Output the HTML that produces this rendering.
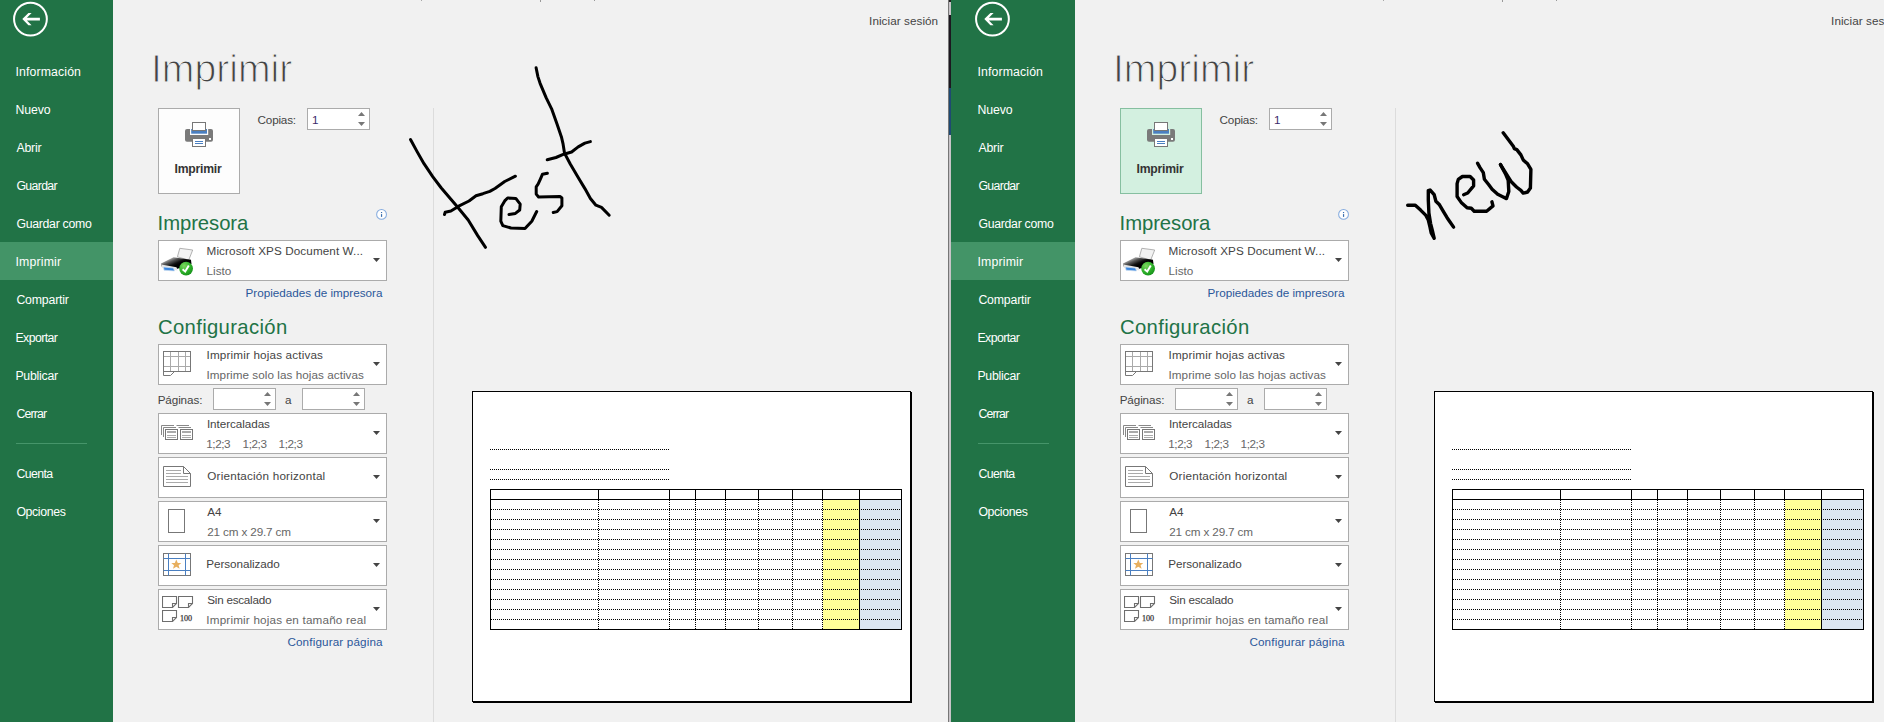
<!DOCTYPE html>
<html><head><meta charset="utf-8"><style>
html,body{margin:0;padding:0}
body{width:1884px;height:722px;overflow:hidden;position:relative;background:#f1f1f1;font-family:"Liberation Sans", sans-serif}
.win{position:absolute;top:0;width:1000px;height:722px}
.t{position:absolute;white-space:nowrap;line-height:1}
.b{position:absolute;display:block}
</style></head><body>
<div class="win" style="left:0px">
<div class="b" style="left:0px;top:0px;width:1000px;height:722px;background:#f1f1f1"></div>
<div class="b" style="left:-11px;top:0px;width:124px;height:722px;background:#217346"></div>
<div class="b" style="left:-11px;top:242px;width:124px;height:38px;background:#439467"></div>
<svg class="b" style="left:12px;top:1px;" width="37" height="37" viewBox="0 0 37 37"><circle cx="18.45" cy="18.1" r="16.4" fill="none" stroke="#fff" stroke-width="2"/><path d="M10.3 18.1 L16.4 12 L19.6 12 L14.9 16.7 L27.9 16.7 L27.9 19.5 L14.9 19.5 L19.6 24.3 L16.4 24.3 Z" fill="#fff"/></svg>
<div class="t" style="left:15.40px;top:66.00px;font-size:12.3px;color:#fff;font-weight:normal;;letter-spacing:0.13px">Información</div>
<div class="t" style="left:15.40px;top:104.00px;font-size:12.3px;color:#fff;font-weight:normal;;letter-spacing:-0.1px">Nuevo</div>
<div class="t" style="left:16.40px;top:142.00px;font-size:12.3px;color:#fff;font-weight:normal;;letter-spacing:-0.2px">Abrir</div>
<div class="t" style="left:16.40px;top:180.00px;font-size:12.3px;color:#fff;font-weight:normal;;letter-spacing:-0.65px">Guardar</div>
<div class="t" style="left:16.40px;top:218.00px;font-size:12.3px;color:#fff;font-weight:normal;;letter-spacing:-0.291px">Guardar como</div>
<div class="t" style="left:15.40px;top:256.00px;font-size:12.3px;color:#fff;font-weight:normal;;letter-spacing:0.186px">Imprimir</div>
<div class="t" style="left:16.40px;top:294.00px;font-size:12.3px;color:#fff;font-weight:normal;;letter-spacing:-0.176px">Compartir</div>
<div class="t" style="left:15.40px;top:332.00px;font-size:12.3px;color:#fff;font-weight:normal;;letter-spacing:-0.557px">Exportar</div>
<div class="t" style="left:15.40px;top:370.00px;font-size:12.3px;color:#fff;font-weight:normal;;letter-spacing:-0.229px">Publicar</div>
<div class="t" style="left:16.40px;top:408.00px;font-size:12.3px;color:#fff;font-weight:normal;;letter-spacing:-0.84px">Cerrar</div>
<div class="t" style="left:16.40px;top:468.00px;font-size:12.3px;color:#fff;font-weight:normal;;letter-spacing:-0.6px">Cuenta</div>
<div class="t" style="left:16.40px;top:506.00px;font-size:12.3px;color:#fff;font-weight:normal;;letter-spacing:-0.357px">Opciones</div>
<div class="b" style="left:16px;top:443px;width:71px;height:1px;background:#46956a"></div>
<div class="b" style="left:421px;top:0px;width:1px;height:1px;background:#a8a8a8"></div>
<div class="b" style="left:540px;top:0px;width:1px;height:2px;background:#999"></div>
<div class="b" style="left:594px;top:0px;width:1px;height:1px;background:#999"></div>
<div class="t" style="left:869.10px;top:15.00px;font-size:11.7px;color:#444;font-weight:normal;;letter-spacing:0.062px">Iniciar sesión</div>
<div class="t" style="left:151.00px;top:49.00px;font-size:39.14px;color:#444;font-weight:normal;-webkit-text-stroke:1.1px #f1f1f1">Imprimir</div>
<div class="b" style="left:433px;top:108px;width:1px;height:614px;background:#dcdcdc"></div>
<div class="b" style="left:158px;top:108px;width:82px;height:86px;background:#fdfdfd;border:1px solid #ababab;box-sizing:border-box"></div>
<svg class="b" style="left:184px;top:121px;" width="30" height="27" viewBox="0 0 30 27"><rect x="1" y="8" width="28" height="12.7" rx="2" fill="#7a7a7a"/><rect x="6" y="8" width="18.2" height="6" fill="#fdfdfd"/><rect x="7.2" y="8" width="15.8" height="4.7" fill="#4a7fc1"/><rect x="8.5" y="1.5" width="13" height="8" fill="#fff" stroke="#777" stroke-width="1"/><rect x="25" y="17" width="2" height="2" fill="#fff"/><rect x="8.5" y="17.5" width="13" height="8" fill="#fff" stroke="#777" stroke-width="1"/><path d="M11 20.5 H19 M11 22.5 H19" stroke="#4a7fc1" stroke-width="1"/></svg>
<div class="t" style="left:174.60px;top:163.00px;font-size:12.2px;color:#333;font-weight:bold;;letter-spacing:-0.229px">Imprimir</div>
<div class="t" style="left:257.60px;top:114.00px;font-size:11.7px;color:#444;font-weight:normal;;letter-spacing:-0.2px">Copias:</div>
<div class="b" style="left:307px;top:108px;width:63px;height:22px;background:#fff;border:1px solid #ababab;box-sizing:border-box"></div><svg class="b" style="left:358px;top:108px;" width="7" height="22" viewBox="0 0 7 22"><path d="M0 8 L3.5 4 L7 8 Z" fill="#777"/><path d="M0 14 L3.5 18 L7 14 Z" fill="#777"/></svg>
<div class="t" style="left:312.00px;top:114.00px;font-size:11.7px;color:#3b2a6b;font-weight:normal;;letter-spacing:0.0px">1</div>
<div class="t" style="left:157.60px;top:213.00px;font-size:20.3px;color:#217346;font-weight:normal;;letter-spacing:-0.075px">Impresora</div>
<svg class="b" style="left:375px;top:208px;" width="13" height="13" viewBox="0 0 13 13"><circle cx="6.55" cy="6.4" r="4.9" fill="#fff" stroke="#86acdf" stroke-width="1.05"/><rect x="5.95" y="4" width="1.2" height="1.1" fill="#3b6fb0"/><rect x="5.95" y="6.1" width="1.2" height="2.8" fill="#3b6fb0"/></svg>
<div class="b" style="left:158px;top:240px;width:229px;height:41px;background:#fff;border:1px solid #ababab;box-sizing:border-box"></div>
<svg class="b" style="left:160px;top:247px;" width="36" height="30" viewBox="0 0 36 30"><defs><linearGradient id="pg0" gradientUnits="userSpaceOnUse" x1="8" y1="11" x2="12" y2="20"><stop offset="0" stop-color="#d0d0d0"/><stop offset="0.45" stop-color="#555"/><stop offset="0.8" stop-color="#111"/><stop offset="1" stop-color="#000"/></linearGradient><radialGradient id="gc0" cx="0.35" cy="0.3" r="0.75"><stop offset="0" stop-color="#7ed860"/><stop offset="0.6" stop-color="#2fb12a"/><stop offset="1" stop-color="#15901a"/></radialGradient></defs><path d="M19.8 1.3 L32.7 3 L28.7 13.1 L17.4 9.8 Z" fill="#f2f2f2" stroke="#a0a0a0" stroke-width="0.8"/><path d="M1 16.5 L13.5 10.2 L31 12.8 L31.5 17 L17.5 21.8 L1.2 19.2 Z" fill="url(#pg0)"/><path d="M1.2 17.5 L16.5 20.2 L17.5 23.5 L2 21 Z" fill="#e6e6e6"/><path d="M3.5 20 L13.5 21 L14.5 24 L4 23.2 Z" fill="#3a86e0" stroke="#cfe0f0" stroke-width="0.7"/><circle cx="26.1" cy="21.6" r="6.9" fill="url(#gc0)"/><path d="M22.6 22.2 L25.2 24.6 L28.8 18.6" fill="none" stroke="#fff" stroke-width="1.9"/></svg>
<div class="t" style="left:206.60px;top:245.00px;font-size:11.7px;color:#444;font-weight:normal;;letter-spacing:0.096px">Microsoft XPS Document W...</div>
<div class="t" style="left:206.60px;top:265.00px;font-size:11.7px;color:#666;font-weight:normal;;letter-spacing:0.0px">Listo</div>
<svg class="b" style="left:373px;top:258px;" width="7" height="4" viewBox="0 0 7 4"><path d="M0 0 H7 L3.5 4 Z" fill="#444"/></svg>
<div class="t" style="left:245.50px;top:287.00px;font-size:11.7px;color:#2b579a;font-weight:normal;;letter-spacing:-0.009px">Propiedades de impresora</div>
<div class="t" style="left:157.90px;top:317.00px;font-size:20.3px;color:#217346;font-weight:normal;;letter-spacing:0.35px">Configuración</div>
<div class="b" style="left:158px;top:344px;width:229px;height:41px;background:#fff;border:1px solid #ababab;box-sizing:border-box"></div>
<svg class="b" style="left:162px;top:350px;" width="30" height="27" viewBox="0 0 30 27"><path d="M8.5 1.5 V21.5 M16.5 1.5 V21.5 M23.5 1.5 V21.5 M1.5 6.5 H28.5 M1.5 16.5 H28.5" stroke="#aaa" stroke-width="1"/><rect x="1.5" y="1.5" width="27" height="20" fill="none" stroke="#777" stroke-width="1"/><path d="M1.5 21.5 V25.5 H8.5 L12.5 21.5" fill="none" stroke="#777" stroke-width="1"/></svg>
<div class="t" style="left:206.50px;top:349.00px;font-size:11.7px;color:#444;font-weight:normal;;letter-spacing:0.162px">Imprimir hojas activas</div>
<div class="t" style="left:206.50px;top:369.00px;font-size:11.7px;color:#666;font-weight:normal;;letter-spacing:0.052px">Imprime solo las hojas activas</div>
<svg class="b" style="left:373px;top:362px;" width="7" height="4" viewBox="0 0 7 4"><path d="M0 0 H7 L3.5 4 Z" fill="#444"/></svg>
<div class="t" style="left:157.70px;top:394.00px;font-size:11.7px;color:#444;font-weight:normal;;letter-spacing:-0.114px">Páginas:</div>
<div class="b" style="left:213px;top:388px;width:63px;height:22px;background:#fff;border:1px solid #ababab;box-sizing:border-box"></div><svg class="b" style="left:264px;top:388px;" width="7" height="22" viewBox="0 0 7 22"><path d="M0 8 L3.5 4 L7 8 Z" fill="#777"/><path d="M0 14 L3.5 18 L7 14 Z" fill="#777"/></svg>
<div class="t" style="left:285.00px;top:394.00px;font-size:11.7px;color:#444;font-weight:normal;;letter-spacing:0.0px">a</div>
<div class="b" style="left:302px;top:388px;width:63px;height:22px;background:#fff;border:1px solid #ababab;box-sizing:border-box"></div><svg class="b" style="left:353px;top:388px;" width="7" height="22" viewBox="0 0 7 22"><path d="M0 8 L3.5 4 L7 8 Z" fill="#777"/><path d="M0 14 L3.5 18 L7 14 Z" fill="#777"/></svg>
<div class="b" style="left:158px;top:413px;width:229px;height:41px;background:#fff;border:1px solid #ababab;box-sizing:border-box"></div>
<svg class="b" style="left:160px;top:424px;" width="34" height="17" viewBox="0 0 34 17"><path d="M1.5 11 V1.5 H14" fill="none" stroke="#888" stroke-width="1"/><path d="M3.5 13 V3.5 H16" fill="none" stroke="#888" stroke-width="1"/><path d="M16.5 1.5 H29 M18.5 3.5 H31" fill="none" stroke="#888" stroke-width="1"/><rect x="5.5" y="5.5" width="12" height="10" fill="#fff" stroke="#777" stroke-width="1"/><rect x="20.5" y="5.5" width="12" height="10" fill="#fff" stroke="#777" stroke-width="1"/><path d="M7 8 H16 M22 8 H31" stroke="#aaa" stroke-width="2"/><path d="M7 11.5 H16 M7 13.5 H16 M22 11.5 H31 M22 13.5 H31" stroke="#aaa" stroke-width="1"/></svg>
<div class="t" style="left:206.90px;top:418.00px;font-size:11.7px;color:#444;font-weight:normal;;letter-spacing:-0.055px">Intercaladas</div>
<div class="t" style="left:206.30px;top:438.00px;font-size:11.7px;color:#666;font-weight:normal;;letter-spacing:-0.425px">1;2;3</div>
<div class="t" style="left:242.60px;top:438.00px;font-size:11.7px;color:#666;font-weight:normal;;letter-spacing:-0.425px">1;2;3</div>
<div class="t" style="left:278.60px;top:438.00px;font-size:11.7px;color:#666;font-weight:normal;;letter-spacing:-0.425px">1;2;3</div>
<svg class="b" style="left:373px;top:431px;" width="7" height="4" viewBox="0 0 7 4"><path d="M0 0 H7 L3.5 4 Z" fill="#444"/></svg>
<div class="b" style="left:158px;top:457px;width:229px;height:41px;background:#fff;border:1px solid #ababab;box-sizing:border-box"></div>
<svg class="b" style="left:162px;top:465px;" width="30" height="23" viewBox="0 0 30 23"><path d="M1.5 1.5 H21.5 L28.5 8.5 V21.5 H1.5 Z" fill="#fff" stroke="#777" stroke-width="1"/><path d="M21.5 1.5 V8.5 H28.5" fill="none" stroke="#777" stroke-width="1"/><path d="M4 5.5 H19 M4 8.5 H19 M4 11.5 H26 M4 14.5 H26 M4 17.5 H26" stroke="#aaa" stroke-width="1"/></svg>
<div class="t" style="left:207.30px;top:470.00px;font-size:11.7px;color:#444;font-weight:normal;;letter-spacing:0.2px">Orientación horizontal</div>
<svg class="b" style="left:373px;top:475px;" width="7" height="4" viewBox="0 0 7 4"><path d="M0 0 H7 L3.5 4 Z" fill="#444"/></svg>
<div class="b" style="left:158px;top:501px;width:229px;height:41px;background:#fff;border:1px solid #ababab;box-sizing:border-box"></div>
<div class="b" style="left:168px;top:509px;width:17px;height:24px;border:1px solid #777;box-sizing:border-box;background:#fff"></div>
<div class="t" style="left:207.20px;top:506.00px;font-size:11.7px;color:#444;font-weight:normal;;letter-spacing:0.0px">A4</div>
<div class="t" style="left:207.20px;top:526.00px;font-size:11.7px;color:#666;font-weight:normal;;letter-spacing:-0.136px">21 cm x 29.7 cm</div>
<svg class="b" style="left:373px;top:519px;" width="7" height="4" viewBox="0 0 7 4"><path d="M0 0 H7 L3.5 4 Z" fill="#444"/></svg>
<div class="b" style="left:158px;top:545px;width:229px;height:41px;background:#fff;border:1px solid #ababab;box-sizing:border-box"></div>
<svg class="b" style="left:162px;top:552px;" width="30" height="25" viewBox="0 0 30 25"><rect x="1.5" y="1.5" width="27" height="22" fill="#fff" stroke="#777" stroke-width="1"/><path d="M6.5 1.5 V23.5 M23.5 1.5 V23.5 M1.5 6.5 H28.5 M1.5 18.5 H28.5" stroke="#4a7fc1" stroke-width="1"/><path d="M14.3 7.5 L15.8 10.9 L19.3 11.1 L16.6 13.3 L17.6 16.8 L14.3 14.8 L11 16.8 L12 13.3 L9.3 11.1 L12.8 10.9 Z" fill="#e8b060"/></svg>
<div class="t" style="left:206.30px;top:558.00px;font-size:11.7px;color:#444;font-weight:normal;;letter-spacing:-0.058px">Personalizado</div>
<svg class="b" style="left:373px;top:563px;" width="7" height="4" viewBox="0 0 7 4"><path d="M0 0 H7 L3.5 4 Z" fill="#444"/></svg>
<div class="b" style="left:158px;top:589px;width:229px;height:41px;background:#fff;border:1px solid #ababab;box-sizing:border-box"></div>
<svg class="b" style="left:162px;top:596px;" width="32" height="27" viewBox="0 0 32 27"><path d="M0.5 0.5 H14.5 V7.5 L10.5 11.5 H0.5 Z" fill="#fff" stroke="#6e6e6e" stroke-width="1.1" stroke-linejoin="miter"/><path d="M14.5 7.5 H10.5 V11.5" fill="none" stroke="#6e6e6e" stroke-width="1.1"/><path d="M16.5 0.5 H30.5 V7.5 L26.5 11.5 H16.5 Z" fill="#fff" stroke="#6e6e6e" stroke-width="1.1" stroke-linejoin="miter"/><path d="M30.5 7.5 H26.5 V11.5" fill="none" stroke="#6e6e6e" stroke-width="1.1"/><path d="M0.5 14.5 H14.5 V21.5 L10.5 25.5 H0.5 Z" fill="#fff" stroke="#6e6e6e" stroke-width="1.1" stroke-linejoin="miter"/><path d="M14.5 21.5 H10.5 V25.5" fill="none" stroke="#6e6e6e" stroke-width="1.1"/><text x="17.9" y="24.9" font-family="Liberation Serif" font-size="8.6" textLength="12.2" lengthAdjust="spacingAndGlyphs" fill="#333" stroke="#333" stroke-width="0.25">100</text></svg>
<div class="t" style="left:207.30px;top:594.00px;font-size:11.7px;color:#444;font-weight:normal;;letter-spacing:-0.255px">Sin escalado</div>
<div class="t" style="left:206.30px;top:614.00px;font-size:11.7px;color:#666;font-weight:normal;;letter-spacing:0.182px">Imprimir hojas en tamaño real</div>
<svg class="b" style="left:373px;top:607px;" width="7" height="4" viewBox="0 0 7 4"><path d="M0 0 H7 L3.5 4 Z" fill="#444"/></svg>
<div class="t" style="left:287.40px;top:636.00px;font-size:11.7px;color:#2b579a;font-weight:normal;;letter-spacing:0.144px">Configurar página</div>
<div class="b" style="left:472px;top:391px;width:439px;height:311px;background:#fff;border:1px solid #000;box-sizing:border-box;box-shadow:1px 1px 0 #000"></div>
<div class="b" style="left:490px;top:449px;width:179px;height:1px;background-image:linear-gradient(90deg,#000 50%,transparent 50%);background-size:2px 1px"></div>
<div class="b" style="left:490px;top:469px;width:179px;height:1px;background-image:linear-gradient(90deg,#000 50%,transparent 50%);background-size:2px 1px"></div>
<div class="b" style="left:490px;top:479px;width:179px;height:1px;background-image:linear-gradient(90deg,#000 50%,transparent 50%);background-size:2px 1px"></div>
<div class="b" style="left:823px;top:500px;width:36px;height:129px;background:#ffff99"></div>
<div class="b" style="left:860px;top:500px;width:41px;height:129px;background:#dce6f1"></div>
<div class="b" style="left:491px;top:509px;width:410px;height:1px;background-image:linear-gradient(90deg,#000 50%,transparent 50%);background-size:2px 1px"></div>
<div class="b" style="left:491px;top:519px;width:410px;height:1px;background-image:linear-gradient(90deg,#000 50%,transparent 50%);background-size:2px 1px"></div>
<div class="b" style="left:491px;top:529px;width:410px;height:1px;background-image:linear-gradient(90deg,#000 50%,transparent 50%);background-size:2px 1px"></div>
<div class="b" style="left:491px;top:539px;width:410px;height:1px;background-image:linear-gradient(90deg,#000 50%,transparent 50%);background-size:2px 1px"></div>
<div class="b" style="left:491px;top:549px;width:410px;height:1px;background-image:linear-gradient(90deg,#000 50%,transparent 50%);background-size:2px 1px"></div>
<div class="b" style="left:491px;top:559px;width:410px;height:1px;background-image:linear-gradient(90deg,#000 50%,transparent 50%);background-size:2px 1px"></div>
<div class="b" style="left:491px;top:569px;width:410px;height:1px;background-image:linear-gradient(90deg,#000 50%,transparent 50%);background-size:2px 1px"></div>
<div class="b" style="left:491px;top:579px;width:410px;height:1px;background-image:linear-gradient(90deg,#000 50%,transparent 50%);background-size:2px 1px"></div>
<div class="b" style="left:491px;top:589px;width:410px;height:1px;background-image:linear-gradient(90deg,#000 50%,transparent 50%);background-size:2px 1px"></div>
<div class="b" style="left:491px;top:599px;width:410px;height:1px;background-image:linear-gradient(90deg,#000 50%,transparent 50%);background-size:2px 1px"></div>
<div class="b" style="left:491px;top:609px;width:410px;height:1px;background-image:linear-gradient(90deg,#000 50%,transparent 50%);background-size:2px 1px"></div>
<div class="b" style="left:491px;top:619px;width:410px;height:1px;background-image:linear-gradient(90deg,#000 50%,transparent 50%);background-size:2px 1px"></div>
<div class="b" style="left:598px;top:500px;width:1px;height:129px;background-image:linear-gradient(180deg,#000 50%,transparent 50%);background-size:1px 2px"></div>
<div class="b" style="left:598px;top:489px;width:1px;height:11px;background:#000"></div>
<div class="b" style="left:669px;top:500px;width:1px;height:129px;background-image:linear-gradient(180deg,#000 50%,transparent 50%);background-size:1px 2px"></div>
<div class="b" style="left:669px;top:489px;width:1px;height:11px;background:#000"></div>
<div class="b" style="left:695px;top:500px;width:1px;height:129px;background-image:linear-gradient(180deg,#000 50%,transparent 50%);background-size:1px 2px"></div>
<div class="b" style="left:695px;top:489px;width:1px;height:11px;background:#000"></div>
<div class="b" style="left:725px;top:500px;width:1px;height:129px;background-image:linear-gradient(180deg,#000 50%,transparent 50%);background-size:1px 2px"></div>
<div class="b" style="left:725px;top:489px;width:1px;height:11px;background:#000"></div>
<div class="b" style="left:758px;top:500px;width:1px;height:129px;background-image:linear-gradient(180deg,#000 50%,transparent 50%);background-size:1px 2px"></div>
<div class="b" style="left:758px;top:489px;width:1px;height:11px;background:#000"></div>
<div class="b" style="left:792px;top:500px;width:1px;height:129px;background-image:linear-gradient(180deg,#000 50%,transparent 50%);background-size:1px 2px"></div>
<div class="b" style="left:792px;top:489px;width:1px;height:11px;background:#000"></div>
<div class="b" style="left:822px;top:500px;width:1px;height:129px;background-image:linear-gradient(180deg,#000 50%,transparent 50%);background-size:1px 2px"></div>
<div class="b" style="left:822px;top:489px;width:1px;height:11px;background:#000"></div>
<div class="b" style="left:859px;top:489px;width:1px;height:141px;background:#000"></div>
<div class="b" style="left:490px;top:489px;width:412px;height:141px;border:1px solid #000;box-sizing:border-box"></div>
<div class="b" style="left:490px;top:499px;width:412px;height:1px;background:#000"></div>
<svg class="b" style="left:0;top:0" width="1000" height="722" viewBox="0 0 1000 722"><g fill="none" stroke="#000" stroke-width="3" stroke-linecap="round" stroke-linejoin="round"><path d="M410.5 139.5 L417.1 151.6 L424.0 163.7 L432.7 176.7 L441.3 188.0 L456.9 206.2 L468.2 220.0 L477.7 235.6 L485.5 247.3"/><path d="M444.5 214.5 L445.2 212.2 L450.9 211.0 L458.7 206.2 L469.0 201.0 L476.0 195.8 L482.9 193.7 L489.8 191.4 L495.0 188.5 L504.7 181.5 L515.4 176.2"/><path d="M509.0 214.4 L515.4 213.4 L519.7 210.0 L520.2 204.2 L515.8 198.4 L507.6 198.0 L504.7 200.9 L501.3 206.7 L500.8 221.2 L502.8 225.6 L511.0 228.0 L525.0 228.5 L531.8 221.2 L536.7 211.5"/><path d="M547.4 173.2 L542.5 174.2 L540.6 178.6 L538.2 183.9 L536.2 186.8 L536.2 194.1 L538.6 197.0 L560.0 196.5 L561.9 198.0 L561.9 205.7 L557.1 211.6 L553.2 212.5"/><path d="M536.1 67.8 L537.9 76.6 L540.1 83.3 L546.1 97.7 L551.6 108.8 L557.1 124.3 L561.6 137.6 L563.1 144.2 L564.5 153.1 L570.4 164.2 L578.2 177.5 L584.9 188.6 L590.4 198.5 L595.9 205.2 L601.5 207.4 L609.2 215.2"/><path d="M547.2 159.8 L556.0 157.5 L563.8 154.2 L571.6 152.0 L578.2 146.9 L584.9 143.1 L590.4 141.6"/></g></svg>
</div>
<div class="win" style="left:962px">
<div class="b" style="left:0px;top:0px;width:1000px;height:722px;background:#f1f1f1"></div>
<div class="b" style="left:-11px;top:0px;width:124px;height:722px;background:#217346"></div>
<div class="b" style="left:-11px;top:242px;width:124px;height:38px;background:#439467"></div>
<svg class="b" style="left:12px;top:1px;" width="37" height="37" viewBox="0 0 37 37"><circle cx="18.45" cy="18.1" r="16.4" fill="none" stroke="#fff" stroke-width="2"/><path d="M10.3 18.1 L16.4 12 L19.6 12 L14.9 16.7 L27.9 16.7 L27.9 19.5 L14.9 19.5 L19.6 24.3 L16.4 24.3 Z" fill="#fff"/></svg>
<div class="t" style="left:15.40px;top:66.00px;font-size:12.3px;color:#fff;font-weight:normal;;letter-spacing:0.13px">Información</div>
<div class="t" style="left:15.40px;top:104.00px;font-size:12.3px;color:#fff;font-weight:normal;;letter-spacing:-0.1px">Nuevo</div>
<div class="t" style="left:16.40px;top:142.00px;font-size:12.3px;color:#fff;font-weight:normal;;letter-spacing:-0.2px">Abrir</div>
<div class="t" style="left:16.40px;top:180.00px;font-size:12.3px;color:#fff;font-weight:normal;;letter-spacing:-0.65px">Guardar</div>
<div class="t" style="left:16.40px;top:218.00px;font-size:12.3px;color:#fff;font-weight:normal;;letter-spacing:-0.291px">Guardar como</div>
<div class="t" style="left:15.40px;top:256.00px;font-size:12.3px;color:#fff;font-weight:normal;;letter-spacing:0.186px">Imprimir</div>
<div class="t" style="left:16.40px;top:294.00px;font-size:12.3px;color:#fff;font-weight:normal;;letter-spacing:-0.176px">Compartir</div>
<div class="t" style="left:15.40px;top:332.00px;font-size:12.3px;color:#fff;font-weight:normal;;letter-spacing:-0.557px">Exportar</div>
<div class="t" style="left:15.40px;top:370.00px;font-size:12.3px;color:#fff;font-weight:normal;;letter-spacing:-0.229px">Publicar</div>
<div class="t" style="left:16.40px;top:408.00px;font-size:12.3px;color:#fff;font-weight:normal;;letter-spacing:-0.84px">Cerrar</div>
<div class="t" style="left:16.40px;top:468.00px;font-size:12.3px;color:#fff;font-weight:normal;;letter-spacing:-0.6px">Cuenta</div>
<div class="t" style="left:16.40px;top:506.00px;font-size:12.3px;color:#fff;font-weight:normal;;letter-spacing:-0.357px">Opciones</div>
<div class="b" style="left:16px;top:443px;width:71px;height:1px;background:#46956a"></div>
<div class="b" style="left:421px;top:0px;width:1px;height:1px;background:#a8a8a8"></div>
<div class="b" style="left:540px;top:0px;width:1px;height:2px;background:#999"></div>
<div class="b" style="left:594px;top:0px;width:1px;height:1px;background:#999"></div>
<div class="t" style="left:869.10px;top:15.00px;font-size:11.7px;color:#444;font-weight:normal;;letter-spacing:0.062px">Iniciar sesión</div>
<div class="t" style="left:151.00px;top:49.00px;font-size:39.14px;color:#444;font-weight:normal;-webkit-text-stroke:1.1px #f1f1f1">Imprimir</div>
<div class="b" style="left:433px;top:108px;width:1px;height:614px;background:#dcdcdc"></div>
<div class="b" style="left:158px;top:108px;width:82px;height:86px;background:#d3f0e0;border:1px solid #86bfa0;box-sizing:border-box"></div>
<svg class="b" style="left:184px;top:121px;" width="30" height="27" viewBox="0 0 30 27"><rect x="1" y="8" width="28" height="12.7" rx="2" fill="#7a7a7a"/><rect x="6" y="8" width="18.2" height="6" fill="#d3f0e0"/><rect x="7.2" y="8" width="15.8" height="4.7" fill="#4a7fc1"/><rect x="8.5" y="1.5" width="13" height="8" fill="#fff" stroke="#777" stroke-width="1"/><rect x="25" y="17" width="2" height="2" fill="#fff"/><rect x="8.5" y="17.5" width="13" height="8" fill="#fff" stroke="#777" stroke-width="1"/><path d="M11 20.5 H19 M11 22.5 H19" stroke="#4a7fc1" stroke-width="1"/></svg>
<div class="t" style="left:174.60px;top:163.00px;font-size:12.2px;color:#333;font-weight:bold;;letter-spacing:-0.229px">Imprimir</div>
<div class="t" style="left:257.60px;top:114.00px;font-size:11.7px;color:#444;font-weight:normal;;letter-spacing:-0.2px">Copias:</div>
<div class="b" style="left:307px;top:108px;width:63px;height:22px;background:#fff;border:1px solid #ababab;box-sizing:border-box"></div><svg class="b" style="left:358px;top:108px;" width="7" height="22" viewBox="0 0 7 22"><path d="M0 8 L3.5 4 L7 8 Z" fill="#777"/><path d="M0 14 L3.5 18 L7 14 Z" fill="#777"/></svg>
<div class="t" style="left:312.00px;top:114.00px;font-size:11.7px;color:#3b2a6b;font-weight:normal;;letter-spacing:0.0px">1</div>
<div class="t" style="left:157.60px;top:213.00px;font-size:20.3px;color:#217346;font-weight:normal;;letter-spacing:-0.075px">Impresora</div>
<svg class="b" style="left:375px;top:208px;" width="13" height="13" viewBox="0 0 13 13"><circle cx="6.55" cy="6.4" r="4.9" fill="#fff" stroke="#86acdf" stroke-width="1.05"/><rect x="5.95" y="4" width="1.2" height="1.1" fill="#3b6fb0"/><rect x="5.95" y="6.1" width="1.2" height="2.8" fill="#3b6fb0"/></svg>
<div class="b" style="left:158px;top:240px;width:229px;height:41px;background:#fff;border:1px solid #ababab;box-sizing:border-box"></div>
<svg class="b" style="left:160px;top:247px;" width="36" height="30" viewBox="0 0 36 30"><defs><linearGradient id="pg962" gradientUnits="userSpaceOnUse" x1="8" y1="11" x2="12" y2="20"><stop offset="0" stop-color="#d0d0d0"/><stop offset="0.45" stop-color="#555"/><stop offset="0.8" stop-color="#111"/><stop offset="1" stop-color="#000"/></linearGradient><radialGradient id="gc962" cx="0.35" cy="0.3" r="0.75"><stop offset="0" stop-color="#7ed860"/><stop offset="0.6" stop-color="#2fb12a"/><stop offset="1" stop-color="#15901a"/></radialGradient></defs><path d="M19.8 1.3 L32.7 3 L28.7 13.1 L17.4 9.8 Z" fill="#f2f2f2" stroke="#a0a0a0" stroke-width="0.8"/><path d="M1 16.5 L13.5 10.2 L31 12.8 L31.5 17 L17.5 21.8 L1.2 19.2 Z" fill="url(#pg962)"/><path d="M1.2 17.5 L16.5 20.2 L17.5 23.5 L2 21 Z" fill="#e6e6e6"/><path d="M3.5 20 L13.5 21 L14.5 24 L4 23.2 Z" fill="#3a86e0" stroke="#cfe0f0" stroke-width="0.7"/><circle cx="26.1" cy="21.6" r="6.9" fill="url(#gc962)"/><path d="M22.6 22.2 L25.2 24.6 L28.8 18.6" fill="none" stroke="#fff" stroke-width="1.9"/></svg>
<div class="t" style="left:206.60px;top:245.00px;font-size:11.7px;color:#444;font-weight:normal;;letter-spacing:0.096px">Microsoft XPS Document W...</div>
<div class="t" style="left:206.60px;top:265.00px;font-size:11.7px;color:#666;font-weight:normal;;letter-spacing:0.0px">Listo</div>
<svg class="b" style="left:373px;top:258px;" width="7" height="4" viewBox="0 0 7 4"><path d="M0 0 H7 L3.5 4 Z" fill="#444"/></svg>
<div class="t" style="left:245.50px;top:287.00px;font-size:11.7px;color:#2b579a;font-weight:normal;;letter-spacing:-0.009px">Propiedades de impresora</div>
<div class="t" style="left:157.90px;top:317.00px;font-size:20.3px;color:#217346;font-weight:normal;;letter-spacing:0.35px">Configuración</div>
<div class="b" style="left:158px;top:344px;width:229px;height:41px;background:#fff;border:1px solid #ababab;box-sizing:border-box"></div>
<svg class="b" style="left:162px;top:350px;" width="30" height="27" viewBox="0 0 30 27"><path d="M8.5 1.5 V21.5 M16.5 1.5 V21.5 M23.5 1.5 V21.5 M1.5 6.5 H28.5 M1.5 16.5 H28.5" stroke="#aaa" stroke-width="1"/><rect x="1.5" y="1.5" width="27" height="20" fill="none" stroke="#777" stroke-width="1"/><path d="M1.5 21.5 V25.5 H8.5 L12.5 21.5" fill="none" stroke="#777" stroke-width="1"/></svg>
<div class="t" style="left:206.50px;top:349.00px;font-size:11.7px;color:#444;font-weight:normal;;letter-spacing:0.162px">Imprimir hojas activas</div>
<div class="t" style="left:206.50px;top:369.00px;font-size:11.7px;color:#666;font-weight:normal;;letter-spacing:0.052px">Imprime solo las hojas activas</div>
<svg class="b" style="left:373px;top:362px;" width="7" height="4" viewBox="0 0 7 4"><path d="M0 0 H7 L3.5 4 Z" fill="#444"/></svg>
<div class="t" style="left:157.70px;top:394.00px;font-size:11.7px;color:#444;font-weight:normal;;letter-spacing:-0.114px">Páginas:</div>
<div class="b" style="left:213px;top:388px;width:63px;height:22px;background:#fff;border:1px solid #ababab;box-sizing:border-box"></div><svg class="b" style="left:264px;top:388px;" width="7" height="22" viewBox="0 0 7 22"><path d="M0 8 L3.5 4 L7 8 Z" fill="#777"/><path d="M0 14 L3.5 18 L7 14 Z" fill="#777"/></svg>
<div class="t" style="left:285.00px;top:394.00px;font-size:11.7px;color:#444;font-weight:normal;;letter-spacing:0.0px">a</div>
<div class="b" style="left:302px;top:388px;width:63px;height:22px;background:#fff;border:1px solid #ababab;box-sizing:border-box"></div><svg class="b" style="left:353px;top:388px;" width="7" height="22" viewBox="0 0 7 22"><path d="M0 8 L3.5 4 L7 8 Z" fill="#777"/><path d="M0 14 L3.5 18 L7 14 Z" fill="#777"/></svg>
<div class="b" style="left:158px;top:413px;width:229px;height:41px;background:#fff;border:1px solid #ababab;box-sizing:border-box"></div>
<svg class="b" style="left:160px;top:424px;" width="34" height="17" viewBox="0 0 34 17"><path d="M1.5 11 V1.5 H14" fill="none" stroke="#888" stroke-width="1"/><path d="M3.5 13 V3.5 H16" fill="none" stroke="#888" stroke-width="1"/><path d="M16.5 1.5 H29 M18.5 3.5 H31" fill="none" stroke="#888" stroke-width="1"/><rect x="5.5" y="5.5" width="12" height="10" fill="#fff" stroke="#777" stroke-width="1"/><rect x="20.5" y="5.5" width="12" height="10" fill="#fff" stroke="#777" stroke-width="1"/><path d="M7 8 H16 M22 8 H31" stroke="#aaa" stroke-width="2"/><path d="M7 11.5 H16 M7 13.5 H16 M22 11.5 H31 M22 13.5 H31" stroke="#aaa" stroke-width="1"/></svg>
<div class="t" style="left:206.90px;top:418.00px;font-size:11.7px;color:#444;font-weight:normal;;letter-spacing:-0.055px">Intercaladas</div>
<div class="t" style="left:206.30px;top:438.00px;font-size:11.7px;color:#666;font-weight:normal;;letter-spacing:-0.425px">1;2;3</div>
<div class="t" style="left:242.60px;top:438.00px;font-size:11.7px;color:#666;font-weight:normal;;letter-spacing:-0.425px">1;2;3</div>
<div class="t" style="left:278.60px;top:438.00px;font-size:11.7px;color:#666;font-weight:normal;;letter-spacing:-0.425px">1;2;3</div>
<svg class="b" style="left:373px;top:431px;" width="7" height="4" viewBox="0 0 7 4"><path d="M0 0 H7 L3.5 4 Z" fill="#444"/></svg>
<div class="b" style="left:158px;top:457px;width:229px;height:41px;background:#fff;border:1px solid #ababab;box-sizing:border-box"></div>
<svg class="b" style="left:162px;top:465px;" width="30" height="23" viewBox="0 0 30 23"><path d="M1.5 1.5 H21.5 L28.5 8.5 V21.5 H1.5 Z" fill="#fff" stroke="#777" stroke-width="1"/><path d="M21.5 1.5 V8.5 H28.5" fill="none" stroke="#777" stroke-width="1"/><path d="M4 5.5 H19 M4 8.5 H19 M4 11.5 H26 M4 14.5 H26 M4 17.5 H26" stroke="#aaa" stroke-width="1"/></svg>
<div class="t" style="left:207.30px;top:470.00px;font-size:11.7px;color:#444;font-weight:normal;;letter-spacing:0.2px">Orientación horizontal</div>
<svg class="b" style="left:373px;top:475px;" width="7" height="4" viewBox="0 0 7 4"><path d="M0 0 H7 L3.5 4 Z" fill="#444"/></svg>
<div class="b" style="left:158px;top:501px;width:229px;height:41px;background:#fff;border:1px solid #ababab;box-sizing:border-box"></div>
<div class="b" style="left:168px;top:509px;width:17px;height:24px;border:1px solid #777;box-sizing:border-box;background:#fff"></div>
<div class="t" style="left:207.20px;top:506.00px;font-size:11.7px;color:#444;font-weight:normal;;letter-spacing:0.0px">A4</div>
<div class="t" style="left:207.20px;top:526.00px;font-size:11.7px;color:#666;font-weight:normal;;letter-spacing:-0.136px">21 cm x 29.7 cm</div>
<svg class="b" style="left:373px;top:519px;" width="7" height="4" viewBox="0 0 7 4"><path d="M0 0 H7 L3.5 4 Z" fill="#444"/></svg>
<div class="b" style="left:158px;top:545px;width:229px;height:41px;background:#fff;border:1px solid #ababab;box-sizing:border-box"></div>
<svg class="b" style="left:162px;top:552px;" width="30" height="25" viewBox="0 0 30 25"><rect x="1.5" y="1.5" width="27" height="22" fill="#fff" stroke="#777" stroke-width="1"/><path d="M6.5 1.5 V23.5 M23.5 1.5 V23.5 M1.5 6.5 H28.5 M1.5 18.5 H28.5" stroke="#4a7fc1" stroke-width="1"/><path d="M14.3 7.5 L15.8 10.9 L19.3 11.1 L16.6 13.3 L17.6 16.8 L14.3 14.8 L11 16.8 L12 13.3 L9.3 11.1 L12.8 10.9 Z" fill="#e8b060"/></svg>
<div class="t" style="left:206.30px;top:558.00px;font-size:11.7px;color:#444;font-weight:normal;;letter-spacing:-0.058px">Personalizado</div>
<svg class="b" style="left:373px;top:563px;" width="7" height="4" viewBox="0 0 7 4"><path d="M0 0 H7 L3.5 4 Z" fill="#444"/></svg>
<div class="b" style="left:158px;top:589px;width:229px;height:41px;background:#fff;border:1px solid #ababab;box-sizing:border-box"></div>
<svg class="b" style="left:162px;top:596px;" width="32" height="27" viewBox="0 0 32 27"><path d="M0.5 0.5 H14.5 V7.5 L10.5 11.5 H0.5 Z" fill="#fff" stroke="#6e6e6e" stroke-width="1.1" stroke-linejoin="miter"/><path d="M14.5 7.5 H10.5 V11.5" fill="none" stroke="#6e6e6e" stroke-width="1.1"/><path d="M16.5 0.5 H30.5 V7.5 L26.5 11.5 H16.5 Z" fill="#fff" stroke="#6e6e6e" stroke-width="1.1" stroke-linejoin="miter"/><path d="M30.5 7.5 H26.5 V11.5" fill="none" stroke="#6e6e6e" stroke-width="1.1"/><path d="M0.5 14.5 H14.5 V21.5 L10.5 25.5 H0.5 Z" fill="#fff" stroke="#6e6e6e" stroke-width="1.1" stroke-linejoin="miter"/><path d="M14.5 21.5 H10.5 V25.5" fill="none" stroke="#6e6e6e" stroke-width="1.1"/><text x="17.9" y="24.9" font-family="Liberation Serif" font-size="8.6" textLength="12.2" lengthAdjust="spacingAndGlyphs" fill="#333" stroke="#333" stroke-width="0.25">100</text></svg>
<div class="t" style="left:207.30px;top:594.00px;font-size:11.7px;color:#444;font-weight:normal;;letter-spacing:-0.255px">Sin escalado</div>
<div class="t" style="left:206.30px;top:614.00px;font-size:11.7px;color:#666;font-weight:normal;;letter-spacing:0.182px">Imprimir hojas en tamaño real</div>
<svg class="b" style="left:373px;top:607px;" width="7" height="4" viewBox="0 0 7 4"><path d="M0 0 H7 L3.5 4 Z" fill="#444"/></svg>
<div class="t" style="left:287.40px;top:636.00px;font-size:11.7px;color:#2b579a;font-weight:normal;;letter-spacing:0.144px">Configurar página</div>
<div class="b" style="left:472px;top:391px;width:439px;height:311px;background:#fff;border:1px solid #000;box-sizing:border-box;box-shadow:1px 1px 0 #000"></div>
<div class="b" style="left:490px;top:449px;width:179px;height:1px;background-image:linear-gradient(90deg,#000 50%,transparent 50%);background-size:2px 1px"></div>
<div class="b" style="left:490px;top:469px;width:179px;height:1px;background-image:linear-gradient(90deg,#000 50%,transparent 50%);background-size:2px 1px"></div>
<div class="b" style="left:490px;top:479px;width:179px;height:1px;background-image:linear-gradient(90deg,#000 50%,transparent 50%);background-size:2px 1px"></div>
<div class="b" style="left:823px;top:500px;width:36px;height:129px;background:#ffff99"></div>
<div class="b" style="left:860px;top:500px;width:41px;height:129px;background:#dce6f1"></div>
<div class="b" style="left:491px;top:509px;width:410px;height:1px;background-image:linear-gradient(90deg,#000 50%,transparent 50%);background-size:2px 1px"></div>
<div class="b" style="left:491px;top:519px;width:410px;height:1px;background-image:linear-gradient(90deg,#000 50%,transparent 50%);background-size:2px 1px"></div>
<div class="b" style="left:491px;top:529px;width:410px;height:1px;background-image:linear-gradient(90deg,#000 50%,transparent 50%);background-size:2px 1px"></div>
<div class="b" style="left:491px;top:539px;width:410px;height:1px;background-image:linear-gradient(90deg,#000 50%,transparent 50%);background-size:2px 1px"></div>
<div class="b" style="left:491px;top:549px;width:410px;height:1px;background-image:linear-gradient(90deg,#000 50%,transparent 50%);background-size:2px 1px"></div>
<div class="b" style="left:491px;top:559px;width:410px;height:1px;background-image:linear-gradient(90deg,#000 50%,transparent 50%);background-size:2px 1px"></div>
<div class="b" style="left:491px;top:569px;width:410px;height:1px;background-image:linear-gradient(90deg,#000 50%,transparent 50%);background-size:2px 1px"></div>
<div class="b" style="left:491px;top:579px;width:410px;height:1px;background-image:linear-gradient(90deg,#000 50%,transparent 50%);background-size:2px 1px"></div>
<div class="b" style="left:491px;top:589px;width:410px;height:1px;background-image:linear-gradient(90deg,#000 50%,transparent 50%);background-size:2px 1px"></div>
<div class="b" style="left:491px;top:599px;width:410px;height:1px;background-image:linear-gradient(90deg,#000 50%,transparent 50%);background-size:2px 1px"></div>
<div class="b" style="left:491px;top:609px;width:410px;height:1px;background-image:linear-gradient(90deg,#000 50%,transparent 50%);background-size:2px 1px"></div>
<div class="b" style="left:491px;top:619px;width:410px;height:1px;background-image:linear-gradient(90deg,#000 50%,transparent 50%);background-size:2px 1px"></div>
<div class="b" style="left:598px;top:500px;width:1px;height:129px;background-image:linear-gradient(180deg,#000 50%,transparent 50%);background-size:1px 2px"></div>
<div class="b" style="left:598px;top:489px;width:1px;height:11px;background:#000"></div>
<div class="b" style="left:669px;top:500px;width:1px;height:129px;background-image:linear-gradient(180deg,#000 50%,transparent 50%);background-size:1px 2px"></div>
<div class="b" style="left:669px;top:489px;width:1px;height:11px;background:#000"></div>
<div class="b" style="left:695px;top:500px;width:1px;height:129px;background-image:linear-gradient(180deg,#000 50%,transparent 50%);background-size:1px 2px"></div>
<div class="b" style="left:695px;top:489px;width:1px;height:11px;background:#000"></div>
<div class="b" style="left:725px;top:500px;width:1px;height:129px;background-image:linear-gradient(180deg,#000 50%,transparent 50%);background-size:1px 2px"></div>
<div class="b" style="left:725px;top:489px;width:1px;height:11px;background:#000"></div>
<div class="b" style="left:758px;top:500px;width:1px;height:129px;background-image:linear-gradient(180deg,#000 50%,transparent 50%);background-size:1px 2px"></div>
<div class="b" style="left:758px;top:489px;width:1px;height:11px;background:#000"></div>
<div class="b" style="left:792px;top:500px;width:1px;height:129px;background-image:linear-gradient(180deg,#000 50%,transparent 50%);background-size:1px 2px"></div>
<div class="b" style="left:792px;top:489px;width:1px;height:11px;background:#000"></div>
<div class="b" style="left:822px;top:500px;width:1px;height:129px;background-image:linear-gradient(180deg,#000 50%,transparent 50%);background-size:1px 2px"></div>
<div class="b" style="left:822px;top:489px;width:1px;height:11px;background:#000"></div>
<div class="b" style="left:859px;top:489px;width:1px;height:141px;background:#000"></div>
<div class="b" style="left:490px;top:489px;width:412px;height:141px;border:1px solid #000;box-sizing:border-box"></div>
<div class="b" style="left:490px;top:499px;width:412px;height:1px;background:#000"></div>
<svg class="b" style="left:0;top:0" width="1000" height="722" viewBox="0 0 1000 722"><g fill="none" stroke="#000" stroke-width="3.4" stroke-linecap="round" stroke-linejoin="round"><path d="M445.7 205.3 L453.3 205.3 L458.6 210.1 L463.9 215.4 L466.3 220.1 L468.0 227.1 L469.2 233.0 L472.2 238.3 L470.4 230.7 L468.6 223.6 L466.9 213.0 L466.3 200.0 L466.3 190.6 L468.0 190.0 L472.2 194.7 L473.9 201.2 L477.5 204.8 L481.6 211.8 L485.1 217.7 L487.5 221.2 L491.6 227.1"/><path d="M501.6 194.7 L505.7 193.0 L511.6 185.9 L511.6 180.0 L508.1 176.5 L500.4 176.5 L496.3 179.4 L495.1 183.6 L495.1 196.5 L499.2 202.4 L505.1 207.7 L509.3 208.3 L512.2 211.2 L524.6 211.2 L531.0 205.9 L529.9 201.8"/><path d="M515.5 163.2 L518.0 167.6 L521.3 172.6 L522.4 179.3 L526.8 184.8 L530.1 189.2 L535.7 194.2 L541.2 197.0 L544.5 198.6 L546.8 191.4 L546.2 180.4 L543.4 173.7 L538.5 164.6"/><path d="M538.5 164.6 L549.0 181.5 L554.5 187.0 L558.9 190.3 L561.2 193.1 L565.6 192.0 L568.4 188.1 L568.9 169.3 L565.6 163.8 L561.2 159.9 L558.9 154.9 L554.8 149.6 L552.3 148.6 L551.3 146.2 L541.2 132.8"/></g></svg>
</div>
<div class="b" style="left:948px;top:0;width:1px;height:722px;background:#777"></div>
<div class="b" style="left:949px;top:0;width:2px;height:722px;background:#c8c4c8"></div>
<div class="b" style="left:949px;top:0;width:2px;height:2px;background:#222"></div>
<div class="b" style="left:949px;top:15px;width:2px;height:73px;background:#1c1820"></div>
<div class="b" style="left:949px;top:88px;width:2px;height:47px;background:#1f4a72"></div>
</body></html>
